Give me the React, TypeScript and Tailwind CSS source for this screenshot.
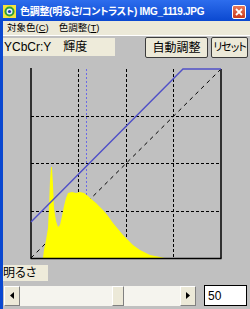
const hist =
  "M43,258 L44,250 L46,240 L48,228 L49,208 L50,180 L51,167 L52,167 L53,185 L54,208 L56,221 L58,227 L60,225 L62,216 L64,206 L66,198 L68,193 L72,192 L76,193 L80,192 L84,193 L88,196 L90,198 L96,203 L103,210 L108,216 L113,223 L118,229 L123,235 L128,240 L133,245 L140,250 L150,255 L160,257 L165,258 Z";

const Graph = () => (
  <svg width={247} height={204} viewBox="3 58 247 204" className="block">
    <g stroke="#000" strokeWidth={1} strokeDasharray="3 2" fill="none">
      <line x1={78.5} y1={69} x2={78.5} y2={258} />
      <line x1={126.5} y1={69} x2={126.5} y2={258} />
      <line x1={173.5} y1={69} x2={173.5} y2={258} />
      <line x1={31} y1={116.5} x2={221} y2={116.5} />
      <line x1={31} y1={163.5} x2={221} y2={163.5} />
      <line x1={31} y1={211.5} x2={221} y2={211.5} />
      <line x1={31} y1={258} x2={221} y2={69} strokeDasharray="4 4" />
    </g>
    <line x1={86.5} y1={69} x2={86.5} y2={258} stroke="#6a6ae6" strokeDasharray="2 2" />
    <path d={hist} fill="#ffff00" />
    <g stroke="#000" strokeWidth={1.5} fill="none">
      <line x1={31} y1={68} x2={31} y2={258.5} />
      <line x1={30.5} y1={258.5} x2={221.5} y2={258.5} />
      <line x1={221} y1={69} x2={221} y2={258.5} />
    </g>
    <polyline points="31,222 183,69 221,69" fill="none" stroke="#5050c8" strokeWidth={1.4} />
  </svg>
);

const AppIcon = () => (
  <svg width={13} height={13} viewBox="0 0 13 13" className="shrink-0">
    <rect x={0} y={0} width={13} height={13} fill="#f4e43c" />
    <circle cx={6.5} cy={6.5} r={5} fill="#2f9e3a" />
    <circle cx={6.5} cy={6.5} r={3} fill="#e8f0ff" />
    <circle cx={6.5} cy={6.5} r={1.6} fill="#1c3fa8" />
  </svg>
);

const CloseButton = () => (
  <div className="ml-auto mr-[4px] flex h-[14px] w-[14px] shrink-0 items-center justify-center rounded-[2px] border border-white bg-linear-to-b from-[#e8785a] to-[#c9381a]">
    <svg width={8} height={8} viewBox="0 0 8 8">
      <path d="M1 1 L7 7 M7 1 L1 7" stroke="#fff" strokeWidth={1.8} />
    </svg>
  </div>
);

const ScrollArrow = ({ dir }: { dir: "left" | "right" }) => (
  <div className="flex h-full w-[16px] shrink-0 items-center justify-center border border-t-white border-l-white border-r-[#808080] border-b-[#808080] bg-[#ece9d8]">
    <svg width={4} height={7} viewBox="0 0 4 7">
      {dir === "left" ? <path d="M4 0 L0 3.5 L4 7 Z" fill="#000" /> : <path d="M0 0 L4 3.5 L0 7 Z" fill="#000" />}
    </svg>
  </div>
);

export default function App() {
  return (
    <div className="flex h-[309px] w-[250px] flex-col overflow-hidden bg-[#c0c0c0] font-['Liberation_Sans','Noto_Sans_CJK_JP',sans-serif] [font-feature-settings:'palt']">
      <div className="flex h-[21px] shrink-0 items-center bg-linear-to-b from-[#2d6ded] to-[#0a48d0] pt-[2px] pl-[3px]">
        <AppIcon />
        <span className="ml-[4px] whitespace-nowrap text-[10px] font-bold leading-none tracking-[-0.3px] text-white">
          色調整(明るさ/コントラスト) IMG_1119.JPG
        </span>
        <CloseButton />
      </div>
      <div className="flex flex-1 flex-col border-l-[3px] border-[#0a48d0]">
        <div className="flex h-[15px] shrink-0 items-center gap-[10px] border-b border-white bg-[#ece9d8] pl-[4px] text-[9.5px] leading-none text-black">
          <span>
            対象色(<span className="underline">C</span>)
          </span>
          <span>
            色調整(<span className="underline">T</span>)
          </span>
        </div>
        <div className="flex h-[22px] shrink-0 items-start pt-[1px]">
          <div className="mt-[1px] flex h-[18px] w-[112px] items-center bg-[#eeebda] pl-[1px] text-[12px] leading-none text-black">
            YCbCr:Y　輝度
          </div>
          <button className="ml-auto flex h-[21px] w-[63px] items-center justify-center rounded-[2px] border border-[#3c3c3c] bg-[#ece9d8] text-[12px] leading-none text-black">
            自動調整
          </button>
          <button className="ml-[3px] mr-[2px] flex h-[21px] w-[37px] items-center justify-center rounded-[2px] border border-[#3c3c3c] bg-[#ece9d8] text-[11px] leading-none tracking-[-1px] text-black">
            リセット
          </button>
        </div>
        <Graph />
        <div className="mt-[3px] flex h-[16px] w-[45px] items-center bg-[#eeebda] text-[12px] leading-none text-black">
          明るさ
        </div>
        <div className="mt-[4px] flex h-[21px] items-center">
          <div className="ml-[1px] flex h-[20px] w-[192px]">
            <ScrollArrow dir="left" />
            <div className="w-[92px] bg-[#f5f4ee]" />
            <div className="w-[12px] border border-t-white border-l-white border-r-[#808080] border-b-[#808080] bg-[#ece9d8]" />
            <div className="flex-1 bg-[#f5f4ee]" />
            <ScrollArrow dir="right" />
          </div>
          <div className="ml-[8px] flex h-[21px] w-[43px] items-center border border-black bg-white pl-[3px] text-[12px] leading-none text-black">
            50
          </div>
        </div>
      </div>
    </div>
  );
}
